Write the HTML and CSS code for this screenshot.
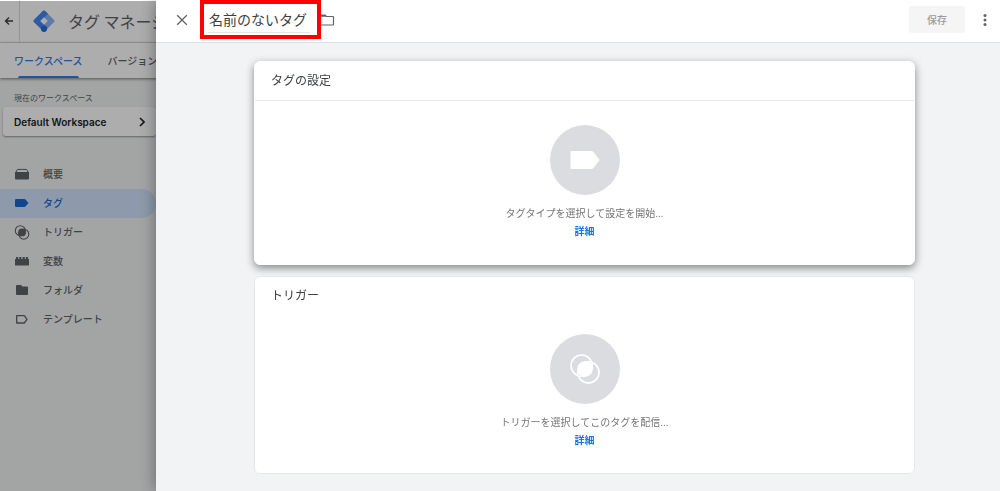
FILE: index.html
```html
<!DOCTYPE html>
<html lang="ja">
  <head>
    <meta charset="UTF-8" />
    <meta name="viewport" content="width=device-width, initial-scale=1" />
    <title>タグ マネージャー</title>
    <link rel="stylesheet" href="styles.css">
  </head>
  <body>
    <div class="app">
      <header class="app-header">
        <button class="back" aria-label="戻る">
          <svg width="10" height="10" viewBox="0 0 10 10"><path d="M9 5H2M5 1.5L1.5 5L5 8.5" fill="none" stroke="currentColor" stroke-width="1.4" /></svg>
        </button>
        <svg class="logo" width="24" height="24" viewBox="0 0 24 24">
          <path d="M12 3L21 12L12 21L3 12Z" fill="#8ab4f8" stroke="#8ab4f8" stroke-width="3" stroke-linejoin="round" />
          <path d="M10.9 1.9Q12 .9 13.1 1.9L16 4.8L8.8 12L15.5 18.7L12 22.5L1.9 13.1Q.9 12 1.9 10.9Z" fill="#4285f4" />
          <path d="M12 8.2L15.8 12L12 15.8L8.2 12Z" fill="#fff" />
          <circle cx="12" cy="19.8" r="3.1" fill="#246fdb" />
        </svg>
        <span class="product">タグ マネージャー</span>
      </header>
      <nav class="tabs">
        <a class="active" href="#">ワークスペース</a>
        <a href="#">バージョン</a>
      </nav>
      <aside class="sidebar">
        <p class="label">現在のワークスペース</p>
        <button class="workspace">
          Default Workspace
          <svg width="6" height="10" viewBox="0 0 6 10"><path d="M1 1L5 5L1 9" fill="none" stroke="currentColor" stroke-width="1.6" /></svg>
        </button>
        <nav class="menu">
          <a href="#">
            <svg width="16" height="16" viewBox="0 0 16 16"><path d="M1.8 6.5L3 3.9Q3.3 3.4 4 3.4H12Q12.7 3.4 13 3.9L14.2 6.5" fill="none" stroke="currentColor" /><path d="M1 6H15V12.5Q15 13.5 14 13.5H2Q1 13.5 1 12.5Z" fill="currentColor" /></svg>
            概要
          </a>
          <a class="active" href="#">
            <svg width="16" height="16" viewBox="0 0 16 16" fill="currentColor"><path d="M2 4H10.5Q11 4 11.4 4.4L14.5 8L11.4 11.6Q11 12 10.5 12H2Q1 12 1 11V5Q1 4 2 4Z" /></svg>
            タグ
          </a>
          <a href="#">
            <svg width="16" height="16" viewBox="0 0 16 16"><g fill="none" stroke="currentColor" stroke-width="1.1"><circle cx="6.3" cy="6.7" r="5" /><circle cx="9.8" cy="10.2" r="5" /></g><circle cx="8" cy="8.4" r="3.9" fill="currentColor" /></svg>
            トリガー
          </a>
          <a href="#">
            <svg width="16" height="16" viewBox="0 0 16 16" fill="currentColor"><path d="M1 6H2V4H4.2V6H5.2V4H7.4V6H8.6V4H10.8V6H11.8V4H14V6H15V12.5H1Z" /></svg>
            変数
          </a>
          <a href="#">
            <svg width="16" height="16" viewBox="0 0 16 16" fill="currentColor"><path d="M3 3H7L8.4 4.5H13Q14 4.5 14 5.5V12Q14 13 13 13H3Q2 13 2 12V4Q2 3 3 3Z" /></svg>
            フォルダ
          </a>
          <a href="#">
            <svg width="16" height="16" viewBox="0 0 16 16"><path d="M2.7 4.7H10.3L13 8.4L10.3 12H2.7Z" fill="none" stroke="currentColor" stroke-width="1.3" stroke-linejoin="round" /></svg>
            テンプレート
          </a>
        </nav>
      </aside>
    </div>
    <div class="scrim"></div>

    <main class="sheet">
      <header class="sheet-header">
        <button class="icon-button" aria-label="閉じる">
          <svg width="12" height="12" viewBox="0 0 12 12"><path d="M1.2 1.2L10.8 10.8M10.8 1.2L1.2 10.8" stroke="currentColor" stroke-width="1.3" /></svg>
        </button>
        <div class="name-field">
          <input class="name" type="text" value="名前のないタグ" aria-label="タグの名前" />
        </div>
        <button class="icon-button folder" aria-label="フォルダ">
          <svg width="16" height="14" viewBox="0 0 16 14"><path d="M1.5 2H6L7.5 3.5H14Q14.5 3.5 14.5 4V11.5Q14.5 12 14 12H2Q1.5 12 1.5 11.5Z" fill="none" stroke="currentColor" stroke-width="1.2" /><path d="M1.5 2H6L7.5 3.8H1.5Z" fill="currentColor" /></svg>
        </button>
        <button class="save" disabled>保存</button>
        <button class="icon-button" aria-label="その他">
          <svg width="4" height="12" viewBox="0 0 4 12" fill="currentColor"><circle cx="2" cy="1.6" r="1.5" /><circle cx="2" cy="6" r="1.5" /><circle cx="2" cy="10.4" r="1.5" /></svg>
        </button>
      </header>

      <div class="cards">
        <section class="card raised">
          <h2>タグの設定</h2>
          <div class="empty">
            <div class="circle">
              <svg width="30" height="18" viewBox="0 0 30 18"><path d="M1.5 0H21.5Q22.5 0 23.2 .8L29.5 9L23.2 17.2Q22.5 18 21.5 18H1.5Q.5 18 .5 17V1Q.5 0 1.5 0Z" fill="#fff" /></svg>
            </div>
            <p>タグタイプを選択して設定を開始...</p>
            <a href="#">詳細</a>
          </div>
        </section>
        <section class="card">
          <h2>トリガー</h2>
          <div class="empty">
            <div class="circle">
              <svg width="30" height="30" viewBox="0 0 30 30"><g fill="none" stroke="#fff" stroke-width="1.6"><circle cx="11.6" cy="11.6" r="10.6" /><circle cx="18.4" cy="18.4" r="10.6" /></g><circle cx="15" cy="15" r="7.8" fill="#fff" /></svg>
            </div>
            <p>トリガーを選択してこのタグを配信...</p>
            <a href="#">詳細</a>
          </div>
        </section>
      </div>
    </main>
  </body>
</html>
```

FILE: styles.css
```css
* {
  box-sizing: border-box;
}

body {
  margin: 0;
  min-height: 100vh;
  overflow: hidden;
  background-color: #f1f3f4;
  color: #3c4043;
  font-family: "Noto Sans CJK JP", sans-serif;
  font-size: 10px;
  line-height: 16px;
}

button,
input {
  padding: 0;
  border: none;
  background: none;
  color: inherit;
  font: inherit;
}

button {
  cursor: pointer;
}

a {
  text-decoration: none;
}

svg {
  display: block;
  flex-shrink: 0;
}

/* app behind the sheet */
.app-header {
  display: flex;
  align-items: center;
  height: 43px;
  background-color: white;
  border-bottom: 1px solid #e0e0e0;
}

.back {
  display: flex;
  align-items: center;
  align-self: stretch;
  width: 20px;
  padding-left: 4px;
  border-right: 1px solid #dadce0;
}

.logo {
  margin: 0 12px;
}

.product {
  color: #5f6368;
  font-size: 16px;
  white-space: nowrap;
}

.tabs {
  display: flex;
  gap: 25px;
  height: 35px;
  padding-left: 14px;
  background-color: white;
  box-shadow: 0 1px 3px rgba(0, 0, 0, 0.5);
}

.tabs a {
  display: flex;
  flex-direction: column;
  justify-content: space-between;
  padding-top: 10px;
  color: #5f6368;
  font-weight: 500;
}

.tabs .active {
  color: #3b78e7;
}

.tabs .active::after {
  content: "";
  height: 2px;
  margin: 0 4px;
  border-radius: 2px 2px 0 0;
  background-color: #3b78e7;
}

.sidebar {
  width: 156px;
  padding-top: 12px;
}

.label {
  margin: 0 0 1px 14px;
  color: #5f6368;
  font-size: 8px;
}

.workspace {
  display: flex;
  align-items: center;
  justify-content: space-between;
  width: 153px;
  height: 29px;
  margin-left: 3px;
  padding: 0 11px;
  border-radius: 3px;
  background-color: white;
  box-shadow: 0 1px 2px rgba(0, 0, 0, 0.4);
  color: #202124;
  font-family: Inter, sans-serif;
  font-weight: 600;
}

.menu {
  margin-top: 24px;
}

.menu a {
  display: flex;
  align-items: center;
  gap: 13px;
  height: 29px;
  padding: 0 0 1px 14px;
  border-radius: 0 15px 15px 0;
  color: #5f6368;
  font-weight: 500;
}

.menu .active {
  background-color: #d2e3fc;
  color: #1967d2;
}

.scrim {
  position: fixed;
  inset: 1px 0 0 0;
  background-color: rgba(0, 0, 0, 0.32);
}

/* sheet */
.sheet {
  position: fixed;
  inset: 0 0 0 156px;
  overflow: auto;
  background-color: #f1f3f4;
  box-shadow: 0 0 16px rgba(0, 0, 0, 0.4);
}

.sheet-header {
  display: flex;
  align-items: center;
  height: 43px;
  padding: 0 13px 3px 20px;
  border-bottom: 1px solid #dfe1e4;
  background-color: white;
}

.icon-button {
  color: #5f6368;
}

.name-field {
  position: relative;
  margin-left: 20px;
}

.name {
  width: 102px;
  height: 26px;
  padding-left: 1px;
  border-bottom: 1px solid #e4e4e4;
  outline: none;
  font-size: 14px;
}

/* red frame round the name */
.name-field::after {
  content: "";
  position: absolute;
  inset: -7px -11px -6px -8px;
  border: 4px solid #f00;
  pointer-events: none;
}

.folder {
  margin-left: 9px;
}

.save {
  width: 56px;
  height: 27px;
  margin: 0 18px 0 auto;
  border-radius: 3px;
  background-color: #f5f5f5;
  color: #9a9a9a;
  font-weight: 500;
}

.cards {
  display: flex;
  flex-direction: column;
  gap: 11px;
  padding: 18px 85px 16px 98px;
}

.card {
  border: 1px solid #e4e6e8;
  border-radius: 6px;
  background-color: white;
}

.card h2 {
  margin: 0;
  padding: 9px 16px 11px;
  font-size: 12px;
  font-weight: 400;
  line-height: 18px;
}

.empty {
  display: flex;
  flex-direction: column;
  align-items: center;
  padding: 19px 0 25px;
}

.raised {
  border-color: white;
  box-shadow: 0 3px 8px rgba(0, 0, 0, 0.45);
}

.raised h2 {
  border-bottom: 1px solid #e4e6e8;
}

.raised .empty {
  padding-top: 24px;
}

.circle {
  display: flex;
  align-items: center;
  justify-content: center;
  width: 70px;
  height: 70px;
  border-radius: 50%;
  background-color: #dadce0;
}

.empty p {
  margin: 10px 0 2px;
  color: #757575;
}

.empty a {
  color: #1a73e8;
  font-weight: 700;
}
```
